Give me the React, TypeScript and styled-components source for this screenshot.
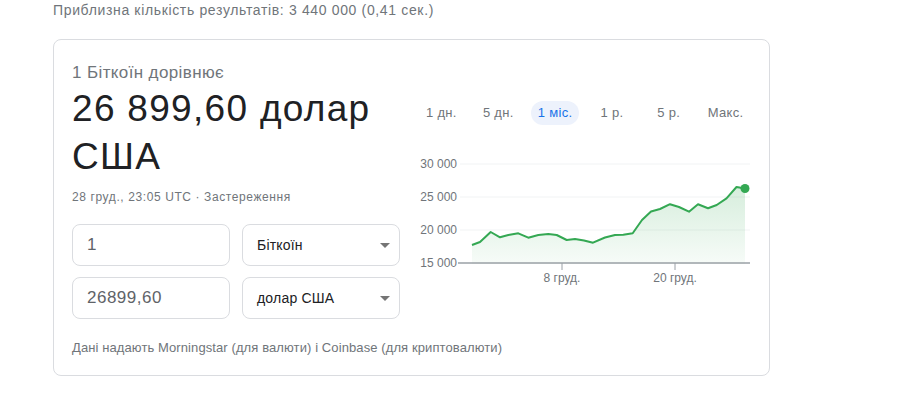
import React from "react";
import styled, { createGlobalStyle } from "styled-components";

const Global = createGlobalStyle`
  html, body { margin: 0; padding: 0; background: #fff; }
  body { font-family: "Liberation Sans", Arial, sans-serif; color: #202124; }
`;

const Page = styled.div`
  padding-left: 53px;
`;

const Stats = styled.div`
  font-size: 14px;
  letter-spacing: 0.65px;
  line-height: 20px;
  color: #70757a;
  margin-bottom: 19px;
`;

const Card = styled.div`
  box-sizing: border-box;
  width: 717px;
  height: 337px;
  border: 1px solid #dadce0;
  border-radius: 8px;
  padding: 21px 14px 0 18px;
  display: flex;
  flex-direction: column;
`;

const TopRow = styled.div`
  display: flex;
  gap: 13px;
`;

const LeftCol = styled.div`
  width: 328px;
  flex: none;
`;

const Label = styled.div`
  font-size: 17px;
  letter-spacing: 0.38px;
  line-height: 24px;
  color: #70757a;
`;

const Value = styled.div`
  font-size: 37px;
  letter-spacing: 1.3px;
  line-height: 48px;
  color: #202124;
`;

const DateLine = styled.div`
  margin-top: 8px;
  font-size: 12px;
  letter-spacing: 0.6px;
  line-height: 16px;
  color: #70757a;
`;

const Converter = styled.div`
  margin-top: 19px;
  display: grid;
  grid-template-columns: 158px 158px;
  column-gap: 12px;
  row-gap: 11px;
`;

const Box = styled.div`
  box-sizing: border-box;
  height: 42px;
  border: 1px solid #dadce0;
  border-radius: 8px;
  display: flex;
  align-items: center;
  justify-content: space-between;
  padding: 0 8px 0 14px;
`;

const AmountText = styled.span`
  font-size: 17px;
  letter-spacing: 0.5px;
  color: #5f6368;
`;

const UnitText = styled.span`
  font-size: 14px;
  letter-spacing: 0.2px;
  color: #202124;
`;

const Arrow = styled.span`
  width: 0;
  height: 0;
  margin-right: 1px;
  border-left: 5px solid transparent;
  border-right: 5px solid transparent;
  border-top: 5px solid #757575;
`;

const RightCol = styled.div`
  width: 341px;
  flex: none;
  display: flex;
  flex-direction: column;
`;

const Tabs = styled.div`
  margin-top: 40px;
  display: grid;
  grid-template-columns: repeat(6, 1fr);
  justify-items: center;
`;

const Tab = styled.div<{ $active?: boolean }>`
  height: 24px;
  line-height: 24px;
  padding: 0 7px;
  border-radius: 12px;
  font-size: 13px;
  letter-spacing: 0.3px;
  color: ${(p) => (p.$active ? "#1a73e8" : "#70757a")};
  background: ${(p) => (p.$active ? "#edf2fc" : "transparent")};
`;

const ChartSvg = styled.svg`
  display: block;
  margin-top: 25px;
  width: 341px;
  height: 140px;
  overflow: visible;
`;

const Footer = styled.div`
  margin-top: 20px;
  font-size: 13px;
  letter-spacing: 0.1px;
  line-height: 18px;
  color: #70757a;
`;

const OX = 413;
const OY = 150;

const raw: [number, number][] = [
  [472, 245], [480, 242], [490.7, 232], [500, 237.3], [508.3, 235], [518.3, 233.3],
  [528.3, 237.7], [538.3, 235], [548.3, 234], [556.7, 235], [566.7, 240], [575, 239],
  [584, 240.5], [593, 242.7], [605, 237.5], [615, 235], [623.3, 234.7], [632.7, 233.3],
  [642, 220], [651, 211.5], [660, 209], [670, 204.2], [679, 207], [689, 211.7],
  [698, 204.3], [708, 208.3], [716.7, 205], [726.5, 198.3], [736.5, 187], [745, 188.5],
];
const pts = raw.map(([x, y]) => [x - OX, y - OY] as [number, number]);
const linePath = pts.map(([x, y], i) => `${i ? "L" : "M"}${x} ${y}`).join(" ");
const baseY = 263 - OY;
const areaPath = `${linePath} L${pts[pts.length - 1][0]} ${baseY + 1} L${pts[0][0]} ${baseY + 1} Z`;

const grid = [
  { y: 164 - OY, label: "30 000" },
  { y: 197 - OY, label: "25 000" },
  { y: 230 - OY, label: "20 000" },
  { y: baseY, label: "15 000" },
];

const ticks = [
  { x: 562 - OX, label: "8 груд." },
  { x: 675 - OX, label: "20 груд." },
];

const tabs = ["1 дн.", "5 дн.", "1 міс.", "1 р.", "5 р.", "Макс."];

const font = '"Liberation Sans", Arial, sans-serif';

function Chart() {
  const last = pts[pts.length - 1];
  const axisL = 458 - OX;
  const axisR = 750 - OX;
  const labelX = 457 - OX;
  return (
    <ChartSvg viewBox="0 0 341 140">
      <defs>
        <linearGradient id="fillG" x1="0" y1="0" x2="0" y2="1">
          <stop offset="0" stopColor="#34a853" stopOpacity="0.2" />
          <stop offset="1" stopColor="#34a853" stopOpacity="0.04" />
        </linearGradient>
      </defs>
      {grid.slice(0, 3).map((g) => (
        <line key={g.y} x1={axisL + 2} x2={axisR} y1={g.y} y2={g.y} stroke="#f1f3f4" strokeWidth={1} />
      ))}
      <path d={areaPath} fill="url(#fillG)" />
      <path d={linePath} fill="none" stroke="#34a853" strokeWidth={2} strokeLinejoin="round" />
      <circle cx={last[0]} cy={last[1]} r={4.5} fill="#34a853" />
      <line x1={axisL} x2={axisR} y1={baseY} y2={baseY} stroke="#9aa0a6" strokeWidth={1.5} />
      {ticks.map((t) => (
        <line key={t.x} x1={t.x} x2={t.x} y1={baseY} y2={baseY + 7} stroke="#9aa0a6" strokeWidth={1} />
      ))}
      {grid.map((g) => (
        <text key={g.label} x={labelX} y={g.y + 4} textAnchor="end" fontSize={12} fill="#70757a" fontFamily={font}>
          {g.label}
        </text>
      ))}
      {ticks.map((t) => (
        <text key={t.label} x={t.x} y={baseY + 19} textAnchor="middle" fontSize={12} fill="#70757a" fontFamily={font}>
          {t.label}
        </text>
      ))}
    </ChartSvg>
  );
}

export default function App() {
  return (
    <Page>
      <Global />
      <Stats>Приблизна кількість результатів: 3 440 000 (0,41 сек.)</Stats>
      <Card>
        <TopRow>
          <LeftCol>
            <Label>1 Біткоїн дорівнює</Label>
            <Value>26 899,60 долар США</Value>
            <DateLine>28 груд., 23:05 UTC · Застереження</DateLine>
            <Converter>
              <Box><AmountText>1</AmountText></Box>
              <Box><UnitText>Біткоїн</UnitText><Arrow /></Box>
              <Box><AmountText>26899,60</AmountText></Box>
              <Box><UnitText>долар США</UnitText><Arrow /></Box>
            </Converter>
          </LeftCol>
          <RightCol>
            <Tabs>
              {tabs.map((t) => (
                <Tab key={t} $active={t === "1 міс."}>{t}</Tab>
              ))}
            </Tabs>
            <Chart />
          </RightCol>
        </TopRow>
        <Footer>Дані надають Morningstar (для валюти) і Coinbase (для криптовалюти)</Footer>
      </Card>
    </Page>
  );
}
